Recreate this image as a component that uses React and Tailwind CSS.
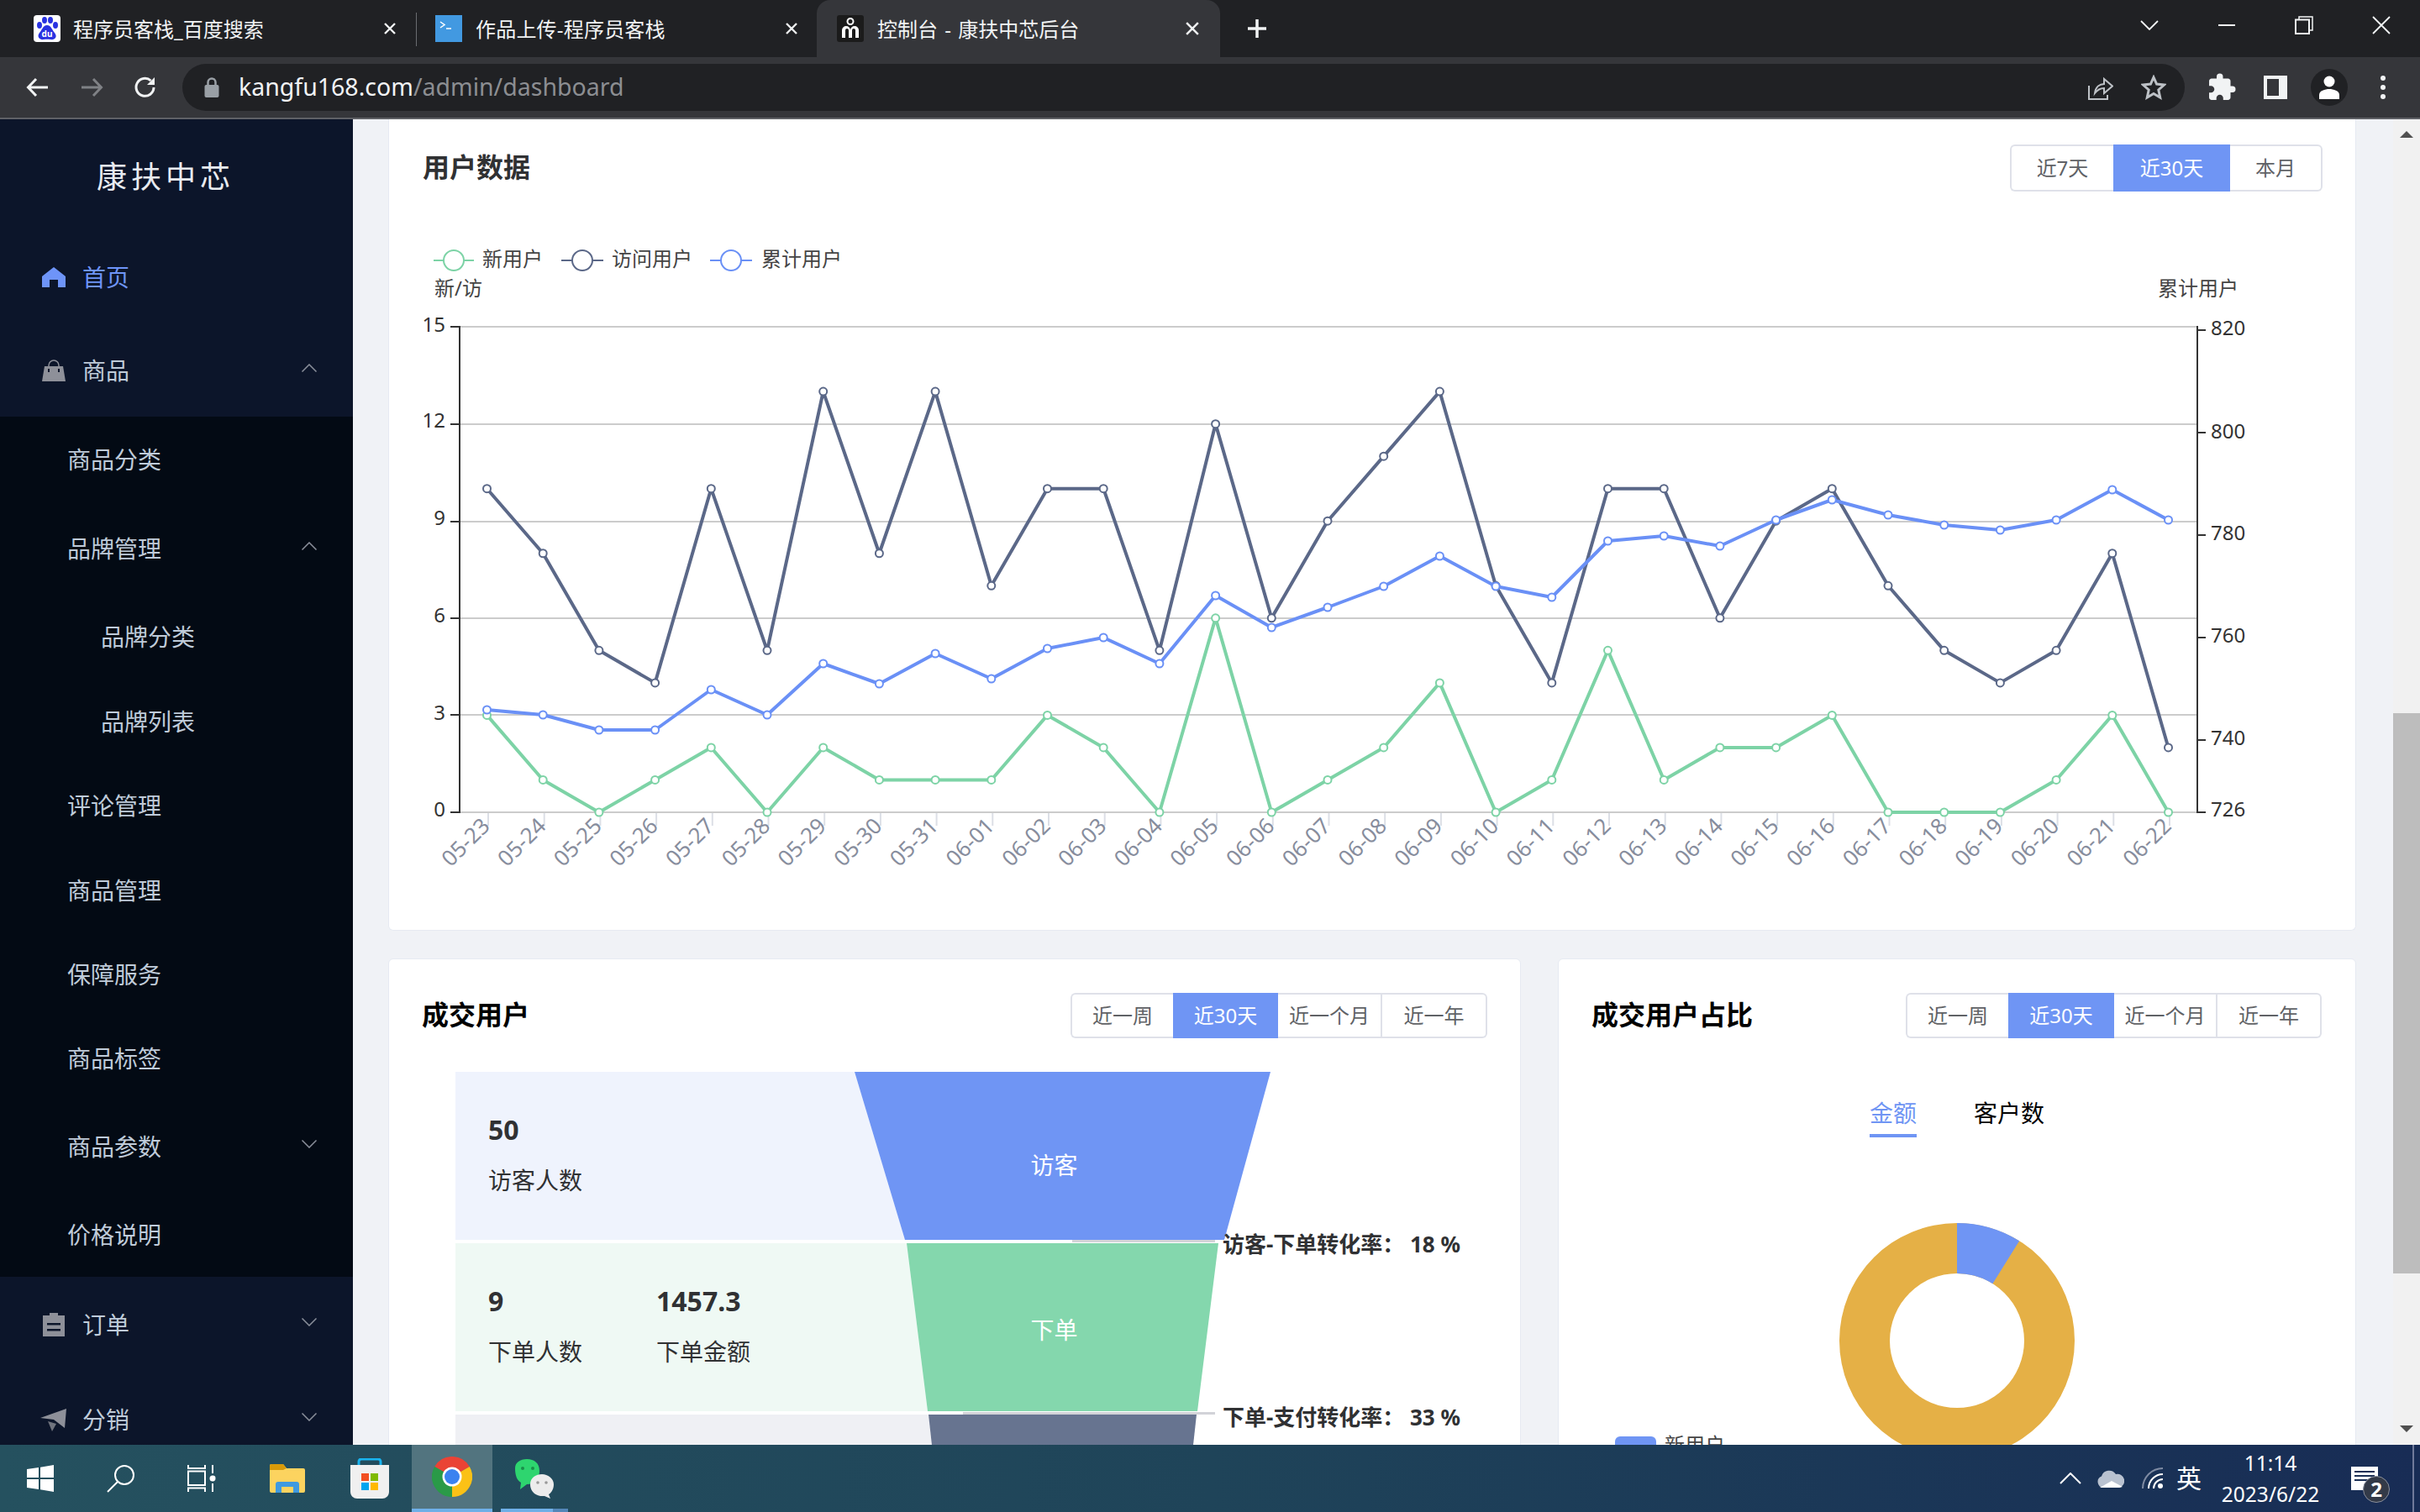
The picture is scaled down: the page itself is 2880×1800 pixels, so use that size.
import React from "react";
import { MdExtension } from "react-icons/md";

const dates = ["05-23","05-24","05-25","05-26","05-27","05-28","05-29","05-30","05-31","06-01","06-02","06-03","06-04","06-05","06-06","06-07","06-08","06-09","06-10","06-11","06-12","06-13","06-14","06-15","06-16","06-17","06-18","06-19","06-20","06-21","06-22"];
const newUsers = [3,1,0,1,2,0,2,1,1,1,3,2,0,6,0,1,2,4,0,1,5,1,2,2,3,0,0,0,1,3,0];
const visitors = [10,8,5,4,10,5,13,8,13,7,10,10,5,12,6,9,11,13,7,4,10,10,6,9,10,7,5,4,5,8,2];
const totalY = [845,851,869,869,821,851,790,814,778,808,772,759,790,709,747,723,698,662,698,711,644,638,650,619,595,613,625,631,619,583,619];
const px = (i) => 579.5 + 66.7 * i;
const vy = (v) => 967 - v * 38.53;
const GREEN = "#7dd3a6", DARK = "#5b6888", BLUE = "#6a90f6";

function Series({ ys, color }) {
  return (
    <g>
      <polyline points={ys.map((y, i) => `${px(i)},${y}`).join(" ")} fill="none" stroke={color} strokeWidth="4" strokeLinejoin="bevel" />
      {ys.map((y, i) => <circle key={i} cx={px(i)} cy={y} r="4.5" fill="#fff" stroke={color} strokeWidth="2" />)}
    </g>
  );
}

function LineChart() {
  const grid = [389, 505, 621, 736, 851, 967];
  const leftL = [["15",389],["12",503],["9",619],["6",735],["3",851],["0",966]];
  const rightL = [["820",393,393],["800",515,516],["780",637,637],["760",759,759],["740",881,881],["726",967,966]];
  const legend = [[516,564,540,574,"新用户",GREEN],[668,718,693,728,"访问用户",DARK],[845,895,870,906,"累计用户",BLUE]];
  return (
    <svg className="block" width="2340" height="760" viewBox="463 280 2340 760">
      {legend.map(([a,b,c,t,label,col]) => (
        <g key={label}>
          <line x1={a} x2={b} y1="310" y2="310" stroke={col} strokeWidth="2" />
          <circle cx={c} cy="310" r="12" fill="#fff" stroke={col} strokeWidth="2" />
          <text x={t} y="311" fontSize="24" fill="#444" dominantBaseline="middle">{label}</text>
        </g>
      ))}
      <text x="517" y="346" fontSize="24" fill="#444" dominantBaseline="middle">新/访</text>
      <text x="2568" y="346" fontSize="24" fill="#444" dominantBaseline="middle">累计用户</text>
      {grid.map((y) => <line key={y} x1="547" x2="2614" y1={y} y2={y} stroke="#cccccc" strokeWidth="2" />)}
      {grid.map((y) => <line key={y} x1="536" x2="547" y1={y} y2={y} stroke="#333" strokeWidth="2" />)}
      <line x1="547" x2="547" y1="388" y2="968" stroke="#333" strokeWidth="2" />
      <line x1="2615" x2="2615" y1="388" y2="968" stroke="#333" strokeWidth="2" />
      {leftL.map(([t,y]) => <text key={t} x="530" y={y} fontSize="24" fill="#333" textAnchor="end" dominantBaseline="middle">{t}</text>)}
      {rightL.map(([t,ty,ly]) => (
        <g key={t}>
          <line x1="2615" x2="2625" y1={ty} y2={ty} stroke="#333" strokeWidth="2" />
          <text x="2631" y={ly} fontSize="24" fill="#333" dominantBaseline="middle">{t}</text>
        </g>
      ))}
      {dates.map((d, i) => (
        <g key={d}>
          <line x1={px(i)+1.5} x2={px(i)+1.5} y1="968" y2="983" stroke="#dcdfe6" strokeWidth="2" />
          <text x={px(i)+5} y="985" fontSize="26" fill="#878d9d" textAnchor="end" transform={`rotate(-45 ${px(i)+5} 985)`}>{d}</text>
        </g>
      ))}
      <Series ys={newUsers.map(vy)} color={GREEN} />
      <Series ys={visitors.map(vy)} color={DARK} />
      <Series ys={totalY} color={BLUE} />
    </svg>
  );
}

function Seg({ items, active, h }) {
  return (
    <div className={`flex text-[24px] ${h}`}>
      {items.map(([label, w], i) => {
        const on = i === active;
        const first = i === 0;
        const last = i === items.length - 1;
        return (
          <div
            key={label}
            style={{ width: w }}
            className={`flex items-center justify-center border-y-2 ${on ? "bg-[#6f95f4] border-[#6f95f4] text-white" : "bg-white border-[#dfe1e9] text-[#606266]"} ${first ? "border-l-2 rounded-l-[6px]" : ""} ${last ? "border-r-2 rounded-r-[6px]" : ""} ${i === 2 && items.length === 4 ? "border-r-2" : ""}`}
          >
            {label}
          </div>
        );
      })}
    </div>
  );
}

const Up = ({ down }) => (
  <svg width="18" height="10" viewBox="0 0 18 10" className={down ? "rotate-180" : ""}><path d="M0.5 9.5 L9 1 L17.5 9.5" fill="none" stroke="#8b909c" strokeWidth="1.5" /></svg>
);

const HomeI = () => <svg width="28" height="24" viewBox="0 0 28 24"><path d="M14 0 L28 11 V24 H19 V15 H9 V24 H0 V11 Z" fill="#6e94f8" /></svg>;
const BagI = () => <svg width="28" height="26" viewBox="0 0 28 26"><path d="M8 9 V7 A6 6 0 0 1 20 7 V9" fill="none" stroke="#8e9099" strokeWidth="1.5" /><path d="M3 8 H25 L28 26 H0 Z" fill="#8e9099" /><rect x="7" y="11" width="2" height="4" fill="#0c152a" /><rect x="19" y="11" width="2" height="4" fill="#0c152a" /></svg>;
const ClipI = () => <svg width="28" height="28" viewBox="0 0 28 28"><path d="M1 3 H9 V0 H19 V3 H27 V28 H1 Z" fill="#8e9099" /><rect x="6" y="12" width="16" height="2.5" fill="#0c152a" /><rect x="6" y="19" width="16" height="2.5" fill="#0c152a" /></svg>;
const PlaneI = () => <svg width="32" height="28" viewBox="0 0 32 28"><path d="M0 12 L31 1 L29 24 L16 14 Z" fill="#8e9099" /><path d="M9 16 L14 28 L19 19 Z" fill="#70747e" /></svg>;

function Sidebar() {
  const sub = [
    ["商品分类",80,102,0],["品牌管理",80,109,1],["品牌分类",120,102,0],["品牌列表",120,100,0],["评论管理",80,100,0],["商品管理",80,101,0],["保障服务",80,99,0],["商品标签",80,101,0],["商品参数",80,110,2],["价格说明",80,100,0],
  ];
  return (
    <div className="w-[420px] h-full shrink-0 bg-[#0c152a] overflow-hidden">
      <div className="h-[134px] pl-[115px] pt-[44px] text-[36px] leading-[50px] tracking-[5px] text-[#e8ebf0]">康扶中芯</div>
      <div className="h-[110px] flex items-center pl-[50px] pb-[2px] text-[28px] text-[#6e94f8]"><div className="w-[28px] mr-[20px] flex justify-center"><HomeI /></div>首页</div>
      <div className="h-[110px] flex items-center pl-[50px] pr-[43px] text-[28px] text-[#bfcbd9]"><div className="w-[28px] mr-[20px] flex justify-center"><BagI /></div>商品<div className="ml-auto -mt-[6px]"><Up /></div></div>
      <div className="bg-[#030a14] h-[1024px]">
        {sub.map(([t, pl, h, c]) => (
          <div key={t} style={{ height: h, paddingLeft: pl }} className="flex items-center pr-[43px] text-[28px] text-[#bfcbd9]">
            {t}
            {c === 1 && <div className="ml-auto -mt-[6px]"><Up /></div>}
            {c === 2 && <div className="ml-auto -mt-[6px]"><Up down /></div>}
          </div>
        ))}
      </div>
      <div className="h-[113px] flex items-center pl-[50px] pr-[43px] text-[28px] text-[#bfcbd9]"><div className="w-[28px] mr-[20px] flex justify-center"><ClipI /></div>订单<div className="ml-auto -mt-[6px]"><Up down /></div></div>
      <div className="h-[114px] flex items-center pl-[48px] pr-[43px] text-[28px] text-[#bfcbd9]"><div className="w-[32px] mr-[18px] flex justify-center"><PlaneI /></div>分销<div className="ml-auto -mt-[6px]"><Up down /></div></div>
    </div>
  );
}

function FunnelCard() {
  return (
    <div className="w-[1348px] h-[900px] shrink-0 bg-white border border-[#e6eaf2] rounded-[6px]">
      <div className="flex items-center justify-between pl-[39px] pr-[39px] pt-[40px]">
        <div className="text-[32px] font-bold text-black leading-none -mt-[3px]">成交用户</div>
        <Seg h="h-[54px]" active={1} items={[["近一周",122],["近30天",125],["近一个月",124],["近一年",125]]} />
      </div>
      <div className="relative mt-[40px] ml-[79px]">
        <div className="flex h-[200px] mb-[4px]">
          <div className="w-[535px] bg-[#eff3fd] pl-[39px] pt-[47px] [clip-path:polygon(0_0,475px_0,100%_100%,0_100%)]">
            <div className="h-[44px] leading-[44px] text-[32px] font-bold text-[#303133]">50</div>
            <div className="h-[44px] leading-[44px] mt-[16px] text-[28px] text-[#303133]">访客人数</div>
          </div>
          <div className="w-[495px] -ml-[60px] bg-[#6f95f4] flex items-center justify-center pt-[22px] pr-[20px] text-[28px] text-white [clip-path:polygon(0_0,100%_0,440px_100%,60px_100%)]">访客</div>
        </div>
        <div className="flex h-[200px] mb-[4px]">
          <div className="w-[562px] bg-[#eff9f4] pl-[39px] pt-[47px] flex [clip-path:polygon(0_0,537px_0,100%_100%,0_100%)]">
            <div className="w-[200px]">
              <div className="h-[44px] leading-[44px] text-[32px] font-bold text-[#303133]">9</div>
              <div className="h-[44px] leading-[44px] mt-[16px] text-[28px] text-[#303133]">下单人数</div>
            </div>
            <div>
              <div className="h-[44px] leading-[44px] text-[32px] font-bold text-[#303133]">1457.3</div>
              <div className="h-[44px] leading-[44px] mt-[16px] text-[28px] text-[#303133]">下单金额</div>
            </div>
          </div>
          <div className="w-[371px] -ml-[25px] bg-[#84d7ad] flex items-center justify-center pt-[6px] pr-[20px] text-[28px] text-white [clip-path:polygon(0_0,100%_0,346px_100%,25px_100%)]">下单</div>
        </div>
        <div className="flex h-[200px]">
          <div className="w-[585px] bg-[#eff0f4] [clip-path:polygon(0_0,563px_0,100%_100%,0_100%)]" />
          <div className="w-[319px] -ml-[22px] bg-[#677490] [clip-path:polygon(0_0,100%_0,297px_100%,22px_100%)]" />
        </div>
        <div className="absolute left-[734px] top-[200px] w-[170px] h-[3px] bg-[#d2d3d8]" />
        <div className="absolute left-[604px] top-[405px] w-[300px] h-[3px] bg-[#d2d3d8]" />
        <div className="absolute left-[913px] top-[187px] flex text-[26px] leading-[36px] font-bold text-[#303133]"><span className="w-[223px]">访客-下单转化率：</span><span>18 %</span></div>
        <div className="absolute left-[913px] top-[393px] flex text-[26px] leading-[36px] font-bold text-[#303133]"><span className="w-[223px]">下单-支付转化率：</span><span>33 %</span></div>
      </div>
    </div>
  );
}

function DonutCard() {
  return (
    <div className="w-[950px] h-[900px] shrink-0 bg-white border border-[#e6eaf2] rounded-[6px]">
      <div className="flex items-center justify-between pl-[39px] pr-[40px] pt-[40px]">
        <div className="text-[32px] font-bold text-black leading-none -mt-[3px]">成交用户占比</div>
        <Seg h="h-[54px]" active={1} items={[["近一周",122],["近30天",126],["近一个月",123],["近一年",124]]} />
      </div>
      <div className="flex justify-center gap-[68px] mt-[69px] text-[28px] leading-[40px]">
        <div className="text-[#6f95f4] pb-[5px] border-b-4 border-[#6f95f4]">金额</div>
        <div className="text-black">客户数</div>
      </div>
      <svg className="block mt-[86px]" width="948" height="360" viewBox="1855 1440 948 360">
        <path d="M2329 1456 A140 140 0 1 1 2329 1736 A140 140 0 1 1 2329 1456 Z M2329 1516 A80 80 0 1 0 2329 1676 A80 80 0 1 0 2329 1516 Z" fill="#e5b046" fillRule="evenodd" />
        <path d="M2329 1456 A140 140 0 0 1 2403.2 1477.3 L2371.4 1528.2 A80 80 0 0 0 2329 1516 Z" fill="#6f95f4" />
        <rect x="1922" y="1710" width="49" height="28" rx="6" fill="#6f95f4" />
        <text x="1981" y="1723" fontSize="24" fill="#444" dominantBaseline="middle">新用户</text>
      </svg>
    </div>
  );
}

const Arrow = ({ color, flip }) => (
  <svg width="30" height="30" viewBox="0 0 30 30" className={flip ? "rotate-180" : ""}><path d="M27 15 H4 M13 5 L3.5 15 L13 25" fill="none" stroke={color} strokeWidth="3" /></svg>
);

function Baidu() {
  return (
    <svg width="32" height="32" viewBox="0 0 32 32" className="shrink-0">
      <rect width="32" height="32" rx="4" fill="#fff" />
      <g fill="#2932e1">
        <ellipse cx="7" cy="12" rx="3" ry="4" /><ellipse cx="13" cy="6" rx="3" ry="4" /><ellipse cx="20" cy="6" rx="3" ry="4" /><ellipse cx="26" cy="12" rx="3" ry="4" />
        <path d="M16 12 C11 12 10 18 7 21 C3 26 8 30 12 29 C14 28.5 18 28.5 20 29 C25 30 29 26 25 21 C22 18 21 12 16 12 Z" />
      </g>
      <text x="16" y="26" fontSize="10" fill="#fff" textAnchor="middle" fontWeight="700">du</text>
    </svg>
  );
}

const CloseX = ({ s = 14, w = 2.4 }) => <svg width={s} height={s} viewBox="0 0 14 14"><path d="M1 1 L13 13 M13 1 L1 13" stroke="#f1f3f4" strokeWidth={w} fill="none" /></svg>;

function TabBar() {
  return (
    <div className="h-[68px] shrink-0 bg-[#202124] flex text-[24px] text-[#f1f3f4]">
      <div className="w-[495px] flex items-center pl-[40px] pr-[24px]">
        <Baidu />
        <span className="ml-[15px] mt-[2px]">程序员客栈_百度搜索</span>
        <div className="ml-auto"><CloseX /></div>
      </div>
      <div className="w-[477px] flex items-center pl-[23px] pr-[23px] relative">
        <div className="absolute left-0 top-[15px] h-[40px] w-[1px] bg-[#6a6c70]" />
        <svg width="32" height="32" viewBox="0 0 32 32" className="shrink-0"><rect width="32" height="32" fill="#4299e1" /><path d="M6 8 L11 11.5 L6 15 M13 16 H19" fill="none" stroke="#fff" strokeWidth="1.5" /></svg>
        <span className="ml-[16px] mt-[2px] tracking-[0.2px]">作品上传-程序员客栈</span>
        <div className="ml-auto"><CloseX /></div>
      </div>
      <div className="w-[480px] flex items-center pl-[24px] pr-[25px] bg-[#35363a] rounded-t-[16px]">
        <svg width="32" height="32" viewBox="0 0 32 32" className="shrink-0"><rect width="32" height="32" rx="3" fill="#1b1b1b" /><circle cx="16" cy="7.5" r="3.5" fill="none" stroke="#fff" strokeWidth="2" /><path d="M6 27 V18 A5 5 0 0 1 16 18 A5 5 0 0 1 26 18 V27 H22 V18 A2 2 0 0 0 18 18 V27 H14 V18 A2 2 0 0 0 10 18 V27 Z" fill="#fff" /></svg>
        <span className="ml-[16px] mt-[2px] [word-spacing:2px]">控制台 - 康扶中芯后台</span>
        <div className="ml-auto"><CloseX s={16} w={2.2} /></div>
      </div>
      <div className="ml-[32px] flex items-center">
        <svg width="24" height="24" viewBox="0 0 24 24"><path d="M12 1 V23 M1 12 H23" stroke="#f1f3f4" strokeWidth="3.5" fill="none" /></svg>
      </div>
      <div className="ml-auto flex items-center pb-[8px]">
        <div className="w-[92px] flex justify-center"><svg width="22" height="12" viewBox="0 0 22 12"><path d="M1 1 L11 11 L21 1" fill="none" stroke="#f1f3f4" strokeWidth="1.8" /></svg></div>
        <div className="w-[92px] flex justify-center"><div className="w-[20px] h-[2px] bg-[#f1f3f4]" /></div>
        <div className="w-[92px] flex justify-center"><svg width="22" height="22" viewBox="0 0 22 22"><rect x="1" y="4.5" width="16" height="16.5" fill="none" stroke="#f1f3f4" strokeWidth="2" /><path d="M5 4 V1 H21 V17 H18" fill="none" stroke="#f1f3f4" strokeWidth="1.5" /></svg></div>
        <div className="w-[92px] flex justify-center"><svg width="22" height="22" viewBox="0 0 22 22"><path d="M1 1 L21 21 M21 1 L1 21" stroke="#f1f3f4" strokeWidth="1.8" fill="none" /></svg></div>
      </div>
    </div>
  );
}

function Toolbar() {
  return (
    <div className="h-[74px] shrink-0 bg-[#35363a] border-b-2 border-[#5f6166] flex items-center pl-[13px]">
      <div className="w-[64px] flex justify-center"><Arrow color="#f1f3f4" /></div>
      <div className="w-[64px] flex justify-center"><Arrow color="#7f8185" flip /></div>
      <div className="w-[64px] flex justify-center">
        <svg width="30" height="30" viewBox="0 0 30 30"><path d="M25 15 A10.5 10.5 0 1 1 21.5 7" fill="none" stroke="#f1f3f4" strokeWidth="3" /><path d="M26 3 V12 H17 Z" fill="#f1f3f4" /></svg>
      </div>
      <div className="ml-[12px] w-[2383px] h-[56px] rounded-full bg-[#202124] flex items-center pl-[26px] pr-[22px]">
        <svg width="18" height="24" viewBox="0 0 18 24" className="shrink-0"><path d="M4.5 10 V6 A4.5 4.5 0 0 1 13.5 6 V10" fill="none" stroke="#9aa0a6" strokeWidth="2.5" /><rect x="0.5" y="9" width="17" height="15" rx="2" fill="#9aa0a6" /></svg>
        <div className="ml-[23px] -mt-[2px] text-[28.5px] leading-none whitespace-nowrap"><span className="text-[#f1f3f4]">kangfu168.com</span><span className="text-[#8c8e92]">/admin/dashboard</span></div>
        <div className="ml-auto flex items-center gap-[33px]">
          <svg width="30" height="30" viewBox="0 0 30 30"><path d="M1 13 V29 H23 V24" fill="none" stroke="#bdc1c6" strokeWidth="2" /><path d="M8 22 C9 14 14 11 19 11 V5 L29 13.5 L19 22 V16 C14 16 11 18 8 22 Z" fill="none" stroke="#bdc1c6" strokeWidth="2" /></svg>
          <svg width="30" height="30" viewBox="0 0 30 30"><path d="M15 3 L18.6 11 L27.5 12 L20.8 18 L22.7 27 L15 22.4 L7.3 27 L9.2 18 L2.5 12 L11.4 11 Z" fill="none" stroke="#bdc1c6" strokeWidth="3" /></svg>
        </div>
      </div>
      <div className="ml-[12px] w-[64px] flex justify-center"><MdExtension size={36} color="#f1f3f4" /></div>
      <div className="w-[64px] flex justify-center"><svg width="28" height="28" viewBox="0 0 28 28"><path d="M0 0 H28 V28 H0 Z M4 4 V24 H18 V4 Z" fill="#f1f3f4" fillRule="evenodd" /></svg></div>
      <div className="w-[64px] flex justify-center">
        <div className="w-[44px] h-[44px] rounded-full bg-[#202124] flex items-center justify-center">
          <svg width="26" height="28" viewBox="0 0 26 28"><circle cx="13" cy="7" r="6.5" fill="#fff" /><path d="M1 28 V23 C1 18 8 16 13 16 C18 16 25 18 25 23 V28 Z" fill="#fff" /></svg>
        </div>
      </div>
      <div className="w-[64px] flex flex-col items-center gap-[5px]">
        <div className="w-[6px] h-[6px] rounded-full bg-[#f1f3f4]" /><div className="w-[6px] h-[6px] rounded-full bg-[#f1f3f4]" /><div className="w-[6px] h-[6px] rounded-full bg-[#f1f3f4]" />
      </div>
    </div>
  );
}

function Scrollbar() {
  return (
    <div className="w-[32px] shrink-0 h-full bg-[#f1f1f1] flex flex-col items-center">
      <div className="mt-[14px] w-0 h-0 border-x-[8px] border-x-transparent border-b-[8px] border-b-[#505050]" />
      <div className="mt-[685px] w-full h-[667px] bg-[#bdbdbd]" />
      <div className="mt-[181px] w-0 h-0 border-x-[8px] border-x-transparent border-t-[8px] border-t-[#505050]" />
    </div>
  );
}

function Taskbar() {
  return (
    <div className="h-[80px] shrink-0 flex bg-gradient-to-r from-[#25515f] via-[#1f4459] to-[#182c55]">
      <div className="w-[96px] flex items-center justify-center">
        <svg width="32" height="32" viewBox="0 0 32 32"><path d="M0 5 L14 3 V15 H0 Z M16 2.7 L32 0 V15 H16 Z M0 17 H14 V29 L0 27 Z M16 17 H32 V32 L16 29.3 Z" fill="#fff" /></svg>
      </div>
      <div className="w-[96px] flex items-center justify-center">
        <svg width="34" height="34" viewBox="0 0 34 34"><circle cx="21" cy="13" r="11" fill="none" stroke="#fff" strokeWidth="2" /><path d="M13 21 L1 33" stroke="#fff" strokeWidth="2" /></svg>
      </div>
      <div className="w-[96px] flex items-center justify-center">
        <svg width="34" height="32" viewBox="0 0 34 32"><path d="M1 0 V4 H21 V0 M1 7.5 H21 V24 H1 Z M1 32 V27.5 H21 V32" fill="none" stroke="#fff" strokeWidth="2" /><path d="M30 0 V10 M30 22 V32" stroke="#fff" strokeWidth="2" /><circle cx="30" cy="16" r="3.5" fill="#fff" /></svg>
      </div>
      <div className="ml-[6px] w-[96px] flex items-center justify-center">
        <svg width="42" height="34" viewBox="0 0 42 34"><path d="M0 2 A2 2 0 0 1 2 0 H16 L20 5 H40 A2 2 0 0 1 42 7 V32 A2 2 0 0 1 40 34 H2 A2 2 0 0 1 0 32 Z" fill="#fcd35f" /><path d="M0 2 A2 2 0 0 1 2 0 H16 L20 5 L16 7 H0 Z" fill="#d99a08" /><path d="M7 34 V24 A3 3 0 0 1 10 21 H32 A3 3 0 0 1 35 24 V34 H28 V27 H14 V34 Z" fill="#3f9ae0" /></svg>
      </div>
      <div className="w-[100px] flex items-center justify-center">
        <svg width="46" height="48" viewBox="0 0 46 48"><path d="M10 11 V4 A3 3 0 0 1 13 1 H33 A3 3 0 0 1 36 4 V11" fill="none" stroke="#19b4f0" strokeWidth="3" /><path d="M0 8 H46 V40 A8 8 0 0 1 38 48 H8 A8 8 0 0 1 0 40 Z" fill="#f0f0f0" /><rect x="13" y="18" width="9" height="9" fill="#f25022" /><rect x="24" y="18" width="9" height="9" fill="#7fba00" /><rect x="13" y="29" width="9" height="9" fill="#00a4ef" /><rect x="24" y="29" width="9" height="9" fill="#ffb900" /></svg>
      </div>
      <div className="w-[96px] bg-[#52747f] border-b-4 border-[#6fb0e8] flex items-center justify-center">
        <svg width="48" height="48" viewBox="0 0 48 48">
          <path d="M24 24 L3.2 12 A24 24 0 0 1 44.8 12 Z" fill="#ea4335" />
          <path d="M24 24 L44.8 12 A24 24 0 0 1 24 48 Z" fill="#fbc116" />
          <path d="M24 24 L24 48 A24 24 0 0 1 3.2 12 Z" fill="#2a9a48" />
          <circle cx="24" cy="24" r="11.5" fill="#fff" /><circle cx="24" cy="24" r="9" fill="#3b82f0" />
        </svg>
      </div>
      <div className="ml-[10px] w-[80px] relative flex items-center justify-center">
        <svg width="48" height="48" viewBox="0 0 48 48" className="-ml-[2px]">
          <path d="M2 12 C2 5 8 1 16 1 C25 1 31 6 31 15 C31 24 25 31 16 31 L8 37 L9 29 C4 26 2 20 2 12 Z" fill="#2ed56f" />
          <circle cx="11" cy="12" r="2" fill="#1a8f4a" /><circle cx="23" cy="12" r="2" fill="#1a8f4a" />
          <path d="M20 31 C20 23 27 19 34 19 C41 19 48 24 48 31 C48 38 44 42 42 43 L44 48 L37 45 C27 46 20 40 20 31 Z" fill="#ececec" />
          <circle cx="29" cy="29" r="1.8" fill="#999" /><circle cx="39" cy="29" r="1.8" fill="#999" />
        </svg>
        <div className="absolute left-0 bottom-0 flex h-[4px]"><div className="w-[62px] bg-[#6fb0e8]" /><div className="w-[18px] bg-[#5487b9]" /></div>
      </div>
      <div className="ml-auto flex items-center text-white">
        <div className="w-[48px] flex justify-center"><svg width="26" height="14" viewBox="0 0 26 14"><path d="M1 13 L13 1 L25 13" fill="none" stroke="#fff" strokeWidth="2" /></svg></div>
        <div className="w-[48px] flex justify-center"><svg width="32" height="22" viewBox="0 0 32 22"><path d="M7 22 A7 7 0 0 1 5 8.5 A9.5 9.5 0 0 1 22 6 A7.5 7.5 0 0 1 26 22 Z" fill="#b9c2d0" /><path d="M3 22 L17 14 L30 21 L26 22 Z" fill="#fff" /></svg></div>
        <div className="w-[51px] flex justify-center"><svg width="26" height="26" viewBox="0 0 26 26"><path d="M1 25 A24 24 0 0 1 25 1" fill="none" stroke="#7f8ba3" strokeWidth="2" /><path d="M8 25 A17 17 0 0 1 25 8" fill="none" stroke="#fff" strokeWidth="2" /><path d="M14 25 A11 11 0 0 1 25 14" fill="none" stroke="#fff" strokeWidth="2" /><circle cx="22" cy="22" r="3" fill="#fff" /></svg></div>
        <div className="w-[36px] text-center text-[30px] leading-none">英</div>
        <div className="w-[158px] flex flex-col items-center text-[24.5px] leading-[37px]">
          <div>11:14</div>
          <div>2023/6/22</div>
        </div>
        <div className="w-[90px] flex justify-start pl-[17px]">
          <div className="relative w-[32px] h-[28px] bg-white">
            <div className="mx-[4px] mt-[5px] h-[2px] bg-[#1b2f55]" />
            <div className="mx-[4px] mt-[3px] h-[2px] bg-[#1b2f55]" />
            <div className="mx-[4px] mt-[3px] h-[2px] bg-[#1b2f55] mr-[10px]" />
            <div className="absolute -right-[14px] top-[11px] w-[32px] h-[32px] rounded-full bg-[#333a48] border border-[#8a8f9c] flex items-center justify-center text-[24px] font-bold leading-none">2</div>
          </div>
        </div>
        <div className="w-[9px] h-full border-l-2 border-[#6f7a9a]" />
      </div>
    </div>
  );
}

export default function App() {
  return (
    <div className="w-[2880px] h-[1800px] flex flex-col overflow-hidden [font-family:'Noto_Sans','Noto_Sans_CJK_SC',sans-serif]">
      <TabBar />
      <Toolbar />
      <div className="flex-1 min-h-0 flex">
        <Sidebar />
        <div className="flex-1 min-w-0 h-full bg-[#f0f2f6] overflow-hidden pl-[42px]">
          <div className="w-[2342px] h-[966px] bg-white border border-t-0 border-[#e6eaf2] rounded-b-[6px]">
            <div className="flex items-center justify-between pl-[40px] pr-[39px] pt-[30px]">
              <div className="text-[32px] font-bold text-[#303133] leading-none -mt-[3px]">用户数据</div>
              <Seg h="h-[56px]" active={1} items={[["近7天",123],["近30天",139],["本月",110]]} />
            </div>
            <div className="mt-[52px]"><LineChart /></div>
          </div>
          <div className="mt-[33px] flex gap-[44px]">
            <FunnelCard />
            <DonutCard />
          </div>
        </div>
        <Scrollbar />
      </div>
      <Taskbar />
    </div>
  );
}
